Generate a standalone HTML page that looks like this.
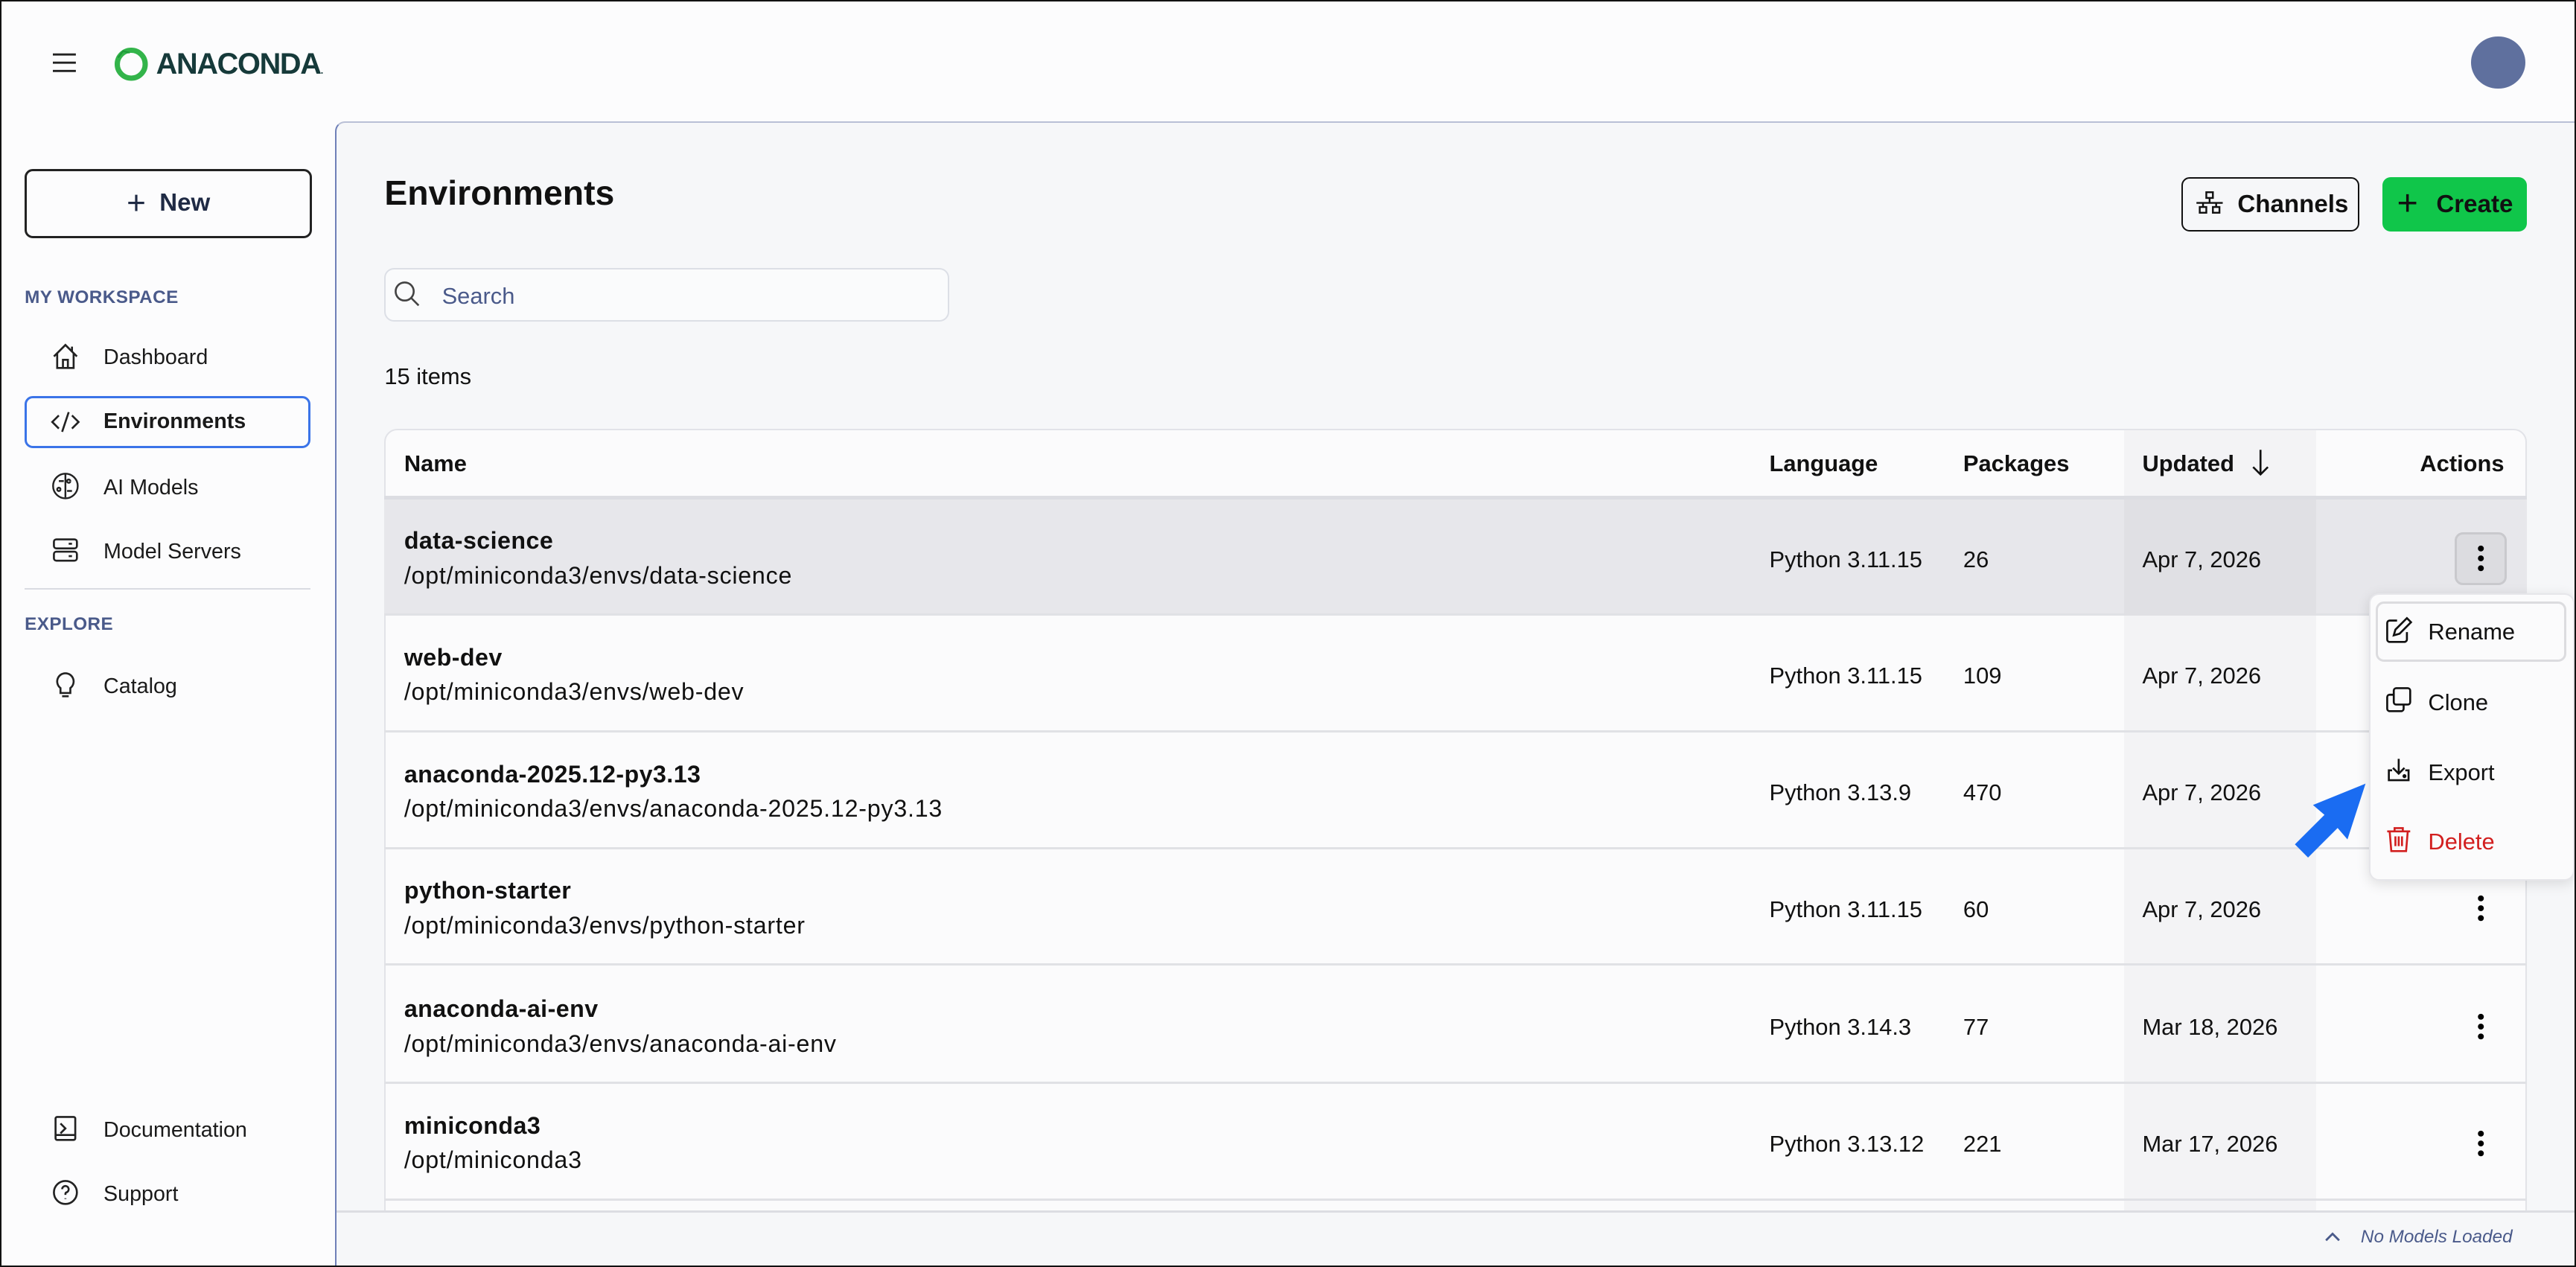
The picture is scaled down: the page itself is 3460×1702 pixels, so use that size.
<!DOCTYPE html>
<html><head><meta charset="utf-8">
<style>
*{box-sizing:border-box;margin:0;padding:0}
html,body{width:3460px;height:1702px;overflow:hidden;background:#fcfcfd}
#z{zoom:2.20663;width:1568px;height:771.5px;position:relative;font-family:"Liberation Sans",sans-serif;color:#111;background:#fcfcfd;overflow:hidden}
#w{position:absolute;left:0;top:1px;width:1568px;height:771px}
.a{position:absolute}
.nav{position:absolute;left:63px;font-size:13px;color:#1a1a1a;line-height:16px}
.ico{position:absolute;left:31px;width:18px;height:18px}
.sec{position:absolute;left:15px;font-size:11px;font-weight:bold;color:#4a5a8a;letter-spacing:.2px}
.row{position:absolute;left:234px;width:1304px;height:71px;border-bottom:1.5px solid #e0e1e5}
.row .n{position:absolute;left:12px;top:17px;font-size:14.6px;letter-spacing:.2px;font-weight:bold;line-height:17px}
.row .p{position:absolute;left:12px;top:38px;font-size:14.6px;letter-spacing:.35px;line-height:17px}
.row .c{position:absolute;top:28px;font-size:14px;line-height:17px}
.kb{position:absolute;left:1270px;top:26px;width:12px;height:20px}
.mi{position:absolute;left:1478px;font-size:14px;line-height:17px}
</style></head><body><div id="z"><div id="w">
<!-- header -->
<svg class="a" style="left:32px;top:31px" width="14" height="12" viewBox="0 0 14 12"><path d="M0 1h14M0 6h14M0 11h14" stroke="#222" stroke-width="1.3"/></svg>
<svg class="a" style="left:69px;top:27px" width="22" height="22" viewBox="0 0 22 22"><circle cx="11" cy="11" r="8.5" fill="none" stroke="#33b44a" stroke-width="3.2"/><path d="M3 7l3-4 4 1" stroke="#1f9a3a" stroke-width="1" fill="none"/></svg>
<div class="a" style="left:95px;top:28px;font-size:18px;font-weight:bold;color:#163a3a;letter-spacing:-.6px">ANACONDA<span style="font-size:6px">.</span></div>
<div class="a" style="left:1504px;top:21px;width:33px;height:32px;border-radius:50%;background:#5f709e"></div>
<!-- main panel -->
<div class="a" style="left:204px;top:73px;width:1370px;height:710px;background:#f6f7f9;border-left:1px solid #6f80b8;border-top:1px solid #b9c0d6;border-top-left-radius:6px"></div>
<!-- sidebar -->
<div class="a" style="left:15px;top:102px;width:175px;height:42px;border:1.5px solid #222;border-radius:5px;text-align:center;font-size:15px;font-weight:bold;color:#1f2a44;line-height:39px"><span style="font-size:20px;font-weight:normal;vertical-align:-2px">+</span>&nbsp; New</div>
<div class="sec" style="top:174px">MY WORKSPACE</div>
<svg class="ico" style="top:207px" viewBox="0 0 18 18" fill="none" stroke="#222" stroke-width="1.2"><path d="M2 9L9 2l7 7M4 7v9h10V7M7.5 16v-5h3v5M13 3v3"/></svg>
<div class="nav" style="top:209px">Dashboard</div>
<div class="a" style="left:15px;top:240px;width:174px;height:32px;border:1.5px solid #3b74e8;border-radius:5px"></div>
<svg class="ico" style="top:247px" viewBox="0 0 18 18" fill="none" stroke="#222" stroke-width="1.2"><path d="M5 5L1 9l4 4M13 5l4 4-4 4M11 3L7 15"/></svg>
<div class="nav" style="top:248px;font-weight:bold">Environments</div>
<svg class="ico" style="top:286px" viewBox="0 0 18 18" fill="none" stroke="#222" stroke-width="1.1"><circle cx="9" cy="9" r="7.5"/><path d="M9 2v14M5 6h3M10 12h3M6 11a1 1 0 1 0 0 .1M12 6a1 1 0 1 0 0 .1"/></svg>
<div class="nav" style="top:288px">AI Models</div>
<svg class="ico" style="top:325px" viewBox="0 0 18 18" fill="none" stroke="#222" stroke-width="1.2"><rect x="2" y="2.5" width="14" height="5.5" rx="1.5"/><rect x="2" y="10" width="14" height="5.5" rx="1.5"/><path d="M11 5.2h2M11 12.7h2"/></svg>
<div class="nav" style="top:327px">Model Servers</div>
<div class="a" style="left:15px;top:357px;width:174px;height:1px;background:#d9dbe2"></div>
<div class="sec" style="top:373px">EXPLORE</div>
<svg class="ico" style="top:407px" viewBox="0 0 18 18" fill="none" stroke="#222" stroke-width="1.2"><path d="M9 2a5 5 0 0 0-3 9v3h6v-3a5 5 0 0 0-3-9zM7 16h4"/></svg>
<div class="nav" style="top:409px">Catalog</div>
<svg class="ico" style="top:677px" viewBox="0 0 18 18" fill="none" stroke="#222" stroke-width="1.2"><rect x="3" y="2" width="12" height="14" rx="1"/><path d="M6 6l3 3-3 3M3 13h12"/></svg>
<div class="nav" style="top:679px">Documentation</div>
<svg class="ico" style="top:716px" viewBox="0 0 18 18" fill="none" stroke="#222" stroke-width="1.2"><circle cx="9" cy="9" r="7"/><path d="M7 7a2 2 0 1 1 2.5 2c-.5.2-.5.6-.5 1.5M9 12.5v.5"/></svg>
<div class="nav" style="top:718px">Support</div>
<!-- content -->
<div class="a" style="left:234px;top:104px;font-size:21px;font-weight:bold;color:#111">Environments</div>
<div class="a" style="left:1328px;top:107px;width:108px;height:33px;border:1.2px solid #111;border-radius:5px"></div>
<svg class="a" style="left:1336px;top:115px" width="18" height="16" viewBox="0 0 18 16" fill="none" stroke="#111" stroke-width="1.1"><rect x="7" y="1" width="4" height="3.5"/><rect x="3" y="10" width="4" height="3.5"/><rect x="11" y="10" width="4" height="3.5"/><path d="M9 4.5v3M1 7.5h16M5 7.5v2.5M13 7.5v2.5"/></svg>
<div class="a" style="left:1362px;top:115px;font-size:15px;font-weight:bold">Channels</div>
<div class="a" style="left:1450px;top:107px;width:88px;height:33px;background:#10c64a;border-radius:5px"></div>
<div class="a" style="left:1459px;top:110px;font-size:22px;color:#111">+</div>
<div class="a" style="left:1483px;top:115px;font-size:15px;font-weight:bold">Create</div>
<div class="a" style="left:234px;top:162px;width:344px;height:33px;border:1px solid #dcdfe6;border-radius:6px;background:#fafbfc"></div>
<svg class="a" style="left:239px;top:169px" width="18" height="18" viewBox="0 0 18 18" fill="none" stroke="#444" stroke-width="1.2"><circle cx="7.5" cy="7.5" r="5.5"/><path d="M11.5 11.5l4.5 4.5"/></svg>
<div class="a" style="left:269px;top:171px;font-size:14px;color:#4a5a8a">Search</div>
<div class="a" style="left:234px;top:220px;font-size:14px">15 items</div>
<!-- table -->
<div class="a" style="left:234px;top:260px;width:1304px;height:480px;background:#fbfbfc;border:1px solid #e2e3e8;border-radius:8px 8px 0 0"></div>
<div class="a" style="left:1293px;top:261px;width:117px;height:480px;background:#f3f3f5"></div>
<div class="a" style="left:234px;top:301px;width:1304px;height:2px;background:#dcdde2"></div>
<div class="a" style="left:246px;top:273px;font-size:14px;font-weight:bold">Name</div>
<div class="a" style="left:1077px;top:273px;font-size:14px;font-weight:bold">Language</div>
<div class="a" style="left:1195px;top:273px;font-size:14px;font-weight:bold">Packages</div>
<div class="a" style="left:1304px;top:273px;font-size:14px;font-weight:bold">Updated</div>
<svg class="a" style="left:1370px;top:272px" width="12" height="18" viewBox="0 0 12 18" fill="none" stroke="#111" stroke-width="1.2"><path d="M6 1v15M1.5 11.5L6 16l4.5-4.5"/></svg>
<div class="a" style="left:1473px;top:273px;font-size:14px;font-weight:bold">Actions</div>

<div class="row" style="top:303px;background:#e7e7eb"><div class="a" style="left:1059px;top:0;width:117px;height:71px;background:#e0e0e4"></div><div class="n">data-science</div><div class="p">/opt/miniconda3/envs/data-science</div><div class="c" style="left:843px">Python 3.11.15</div><div class="c" style="left:961px">26</div><div class="c" style="left:1070px">Apr 7, 2026</div>
<div class="a" style="left:1260px;top:20px;width:32px;height:32px;background:#dcdce0;border:1.5px solid #c9c9cd;border-radius:5px"></div><svg class="kb" viewBox="0 0 12 20"><circle cx="6" cy="4" r="1.8"/><circle cx="6" cy="10" r="1.8"/><circle cx="6" cy="16" r="1.8"/></svg></div>
<div class="row" style="top:374px"><div class="n">web-dev</div><div class="p">/opt/miniconda3/envs/web-dev</div><div class="c" style="left:843px">Python 3.11.15</div><div class="c" style="left:961px">109</div><div class="c" style="left:1070px">Apr 7, 2026</div></div>
<div class="row" style="top:445px"><div class="n">anaconda-2025.12-py3.13</div><div class="p">/opt/miniconda3/envs/anaconda-2025.12-py3.13</div><div class="c" style="left:843px">Python 3.13.9</div><div class="c" style="left:961px">470</div><div class="c" style="left:1070px">Apr 7, 2026</div></div>
<div class="row" style="top:516px"><div class="n">python-starter</div><div class="p">/opt/miniconda3/envs/python-starter</div><div class="c" style="left:843px">Python 3.11.15</div><div class="c" style="left:961px">60</div><div class="c" style="left:1070px">Apr 7, 2026</div><svg class="kb" viewBox="0 0 12 20"><circle cx="6" cy="4" r="1.8"/><circle cx="6" cy="10" r="1.8"/><circle cx="6" cy="16" r="1.8"/></svg></div>
<div class="row" style="top:588px"><div class="n">anaconda-ai-env</div><div class="p">/opt/miniconda3/envs/anaconda-ai-env</div><div class="c" style="left:843px">Python 3.14.3</div><div class="c" style="left:961px">77</div><div class="c" style="left:1070px">Mar 18, 2026</div><svg class="kb" viewBox="0 0 12 20"><circle cx="6" cy="4" r="1.8"/><circle cx="6" cy="10" r="1.8"/><circle cx="6" cy="16" r="1.8"/></svg></div>
<div class="row" style="top:659px"><div class="n">miniconda3</div><div class="p">/opt/miniconda3</div><div class="c" style="left:843px">Python 3.13.12</div><div class="c" style="left:961px">221</div><div class="c" style="left:1070px">Mar 17, 2026</div><svg class="kb" viewBox="0 0 12 20"><circle cx="6" cy="4" r="1.8"/><circle cx="6" cy="10" r="1.8"/><circle cx="6" cy="16" r="1.8"/></svg></div>
<!-- status bar -->
<div class="a" style="left:205px;top:736px;width:1370px;height:40px;background:#f6f7f9;border-top:1.5px solid #dcdde2"></div>
<svg class="a" style="left:1415px;top:748px" width="10" height="7" viewBox="0 0 10 7" fill="none" stroke="#4a5a8a" stroke-width="1.3"><path d="M1 6l4-4 4 4"/></svg>
<div class="a" style="left:1437px;top:746px;font-size:11px;font-style:italic;color:#4a5a8a">No Models Loaded</div>
<!-- dropdown -->
<div class="a" style="left:1442px;top:360px;width:125px;height:175px;background:#fbfbfc;border:1px solid #e6e6ea;border-radius:6px;box-shadow:0 2px 8px rgba(0,0,0,.12)"></div>
<div class="a" style="left:1446px;top:365px;width:116px;height:37px;border:1.5px solid #dcdcdf;border-radius:5px"></div>
<svg class="a" style="left:1451px;top:374px" width="18" height="18" viewBox="0 0 18 18" fill="none" stroke="#111" stroke-width="1.2"><path d="M8 3H3.5A1.5 1.5 0 0 0 2 4.5v10A1.5 1.5 0 0 0 3.5 16h9a1.5 1.5 0 0 0 1.5-1.5V10M6 12l1-3.5 7-7 2.5 2.5-7 7z"/></svg>
<div class="mi" style="top:375px">Rename</div>
<svg class="a" style="left:1451px;top:416px" width="18" height="18" viewBox="0 0 18 18" fill="none" stroke="#111" stroke-width="1.2"><rect x="6" y="2" width="10" height="10" rx="1.5"/><path d="M6 6H3.5A1.5 1.5 0 0 0 2 7.5v7A1.5 1.5 0 0 0 3.5 16h7a1.5 1.5 0 0 0 1.5-1.5V12"/></svg>
<div class="mi" style="top:418px">Clone</div>
<svg class="a" style="left:1451px;top:459px" width="18" height="18" viewBox="0 0 18 18" fill="none" stroke="#111" stroke-width="1.2"><path d="M9 2v9M5.5 7.5L9 11l3.5-3.5M5 9H3v6h12V9h-2"/><circle cx="12.5" cy="12.5" r=".6" fill="#111"/></svg>
<div class="mi" style="top:461px">Export</div>
<svg class="a" style="left:1451px;top:501px" width="18" height="18" viewBox="0 0 18 18" fill="none" stroke="#d21f1f" stroke-width="1.2"><path d="M2 4h14M6.5 4V2h5v2M3.5 4l1 12h9l1-12M7 7v6M9 7v6M11 7v6"/></svg>
<div class="mi" style="top:503px;color:#d21f1f">Delete</div>
<!-- arrow -->
<svg class="a" style="left:1390px;top:468px" width="60" height="60" viewBox="0 0 60 60"><polygon points="50,8 39,42 33,35 15,53 7,45 25,27 18,21" fill="#1a6cf2"/></svg>
</div>
<div class="a" style="left:0;top:0;width:1568px;height:771.5px;border:1px solid #111;pointer-events:none"></div>
</div></body></html>
